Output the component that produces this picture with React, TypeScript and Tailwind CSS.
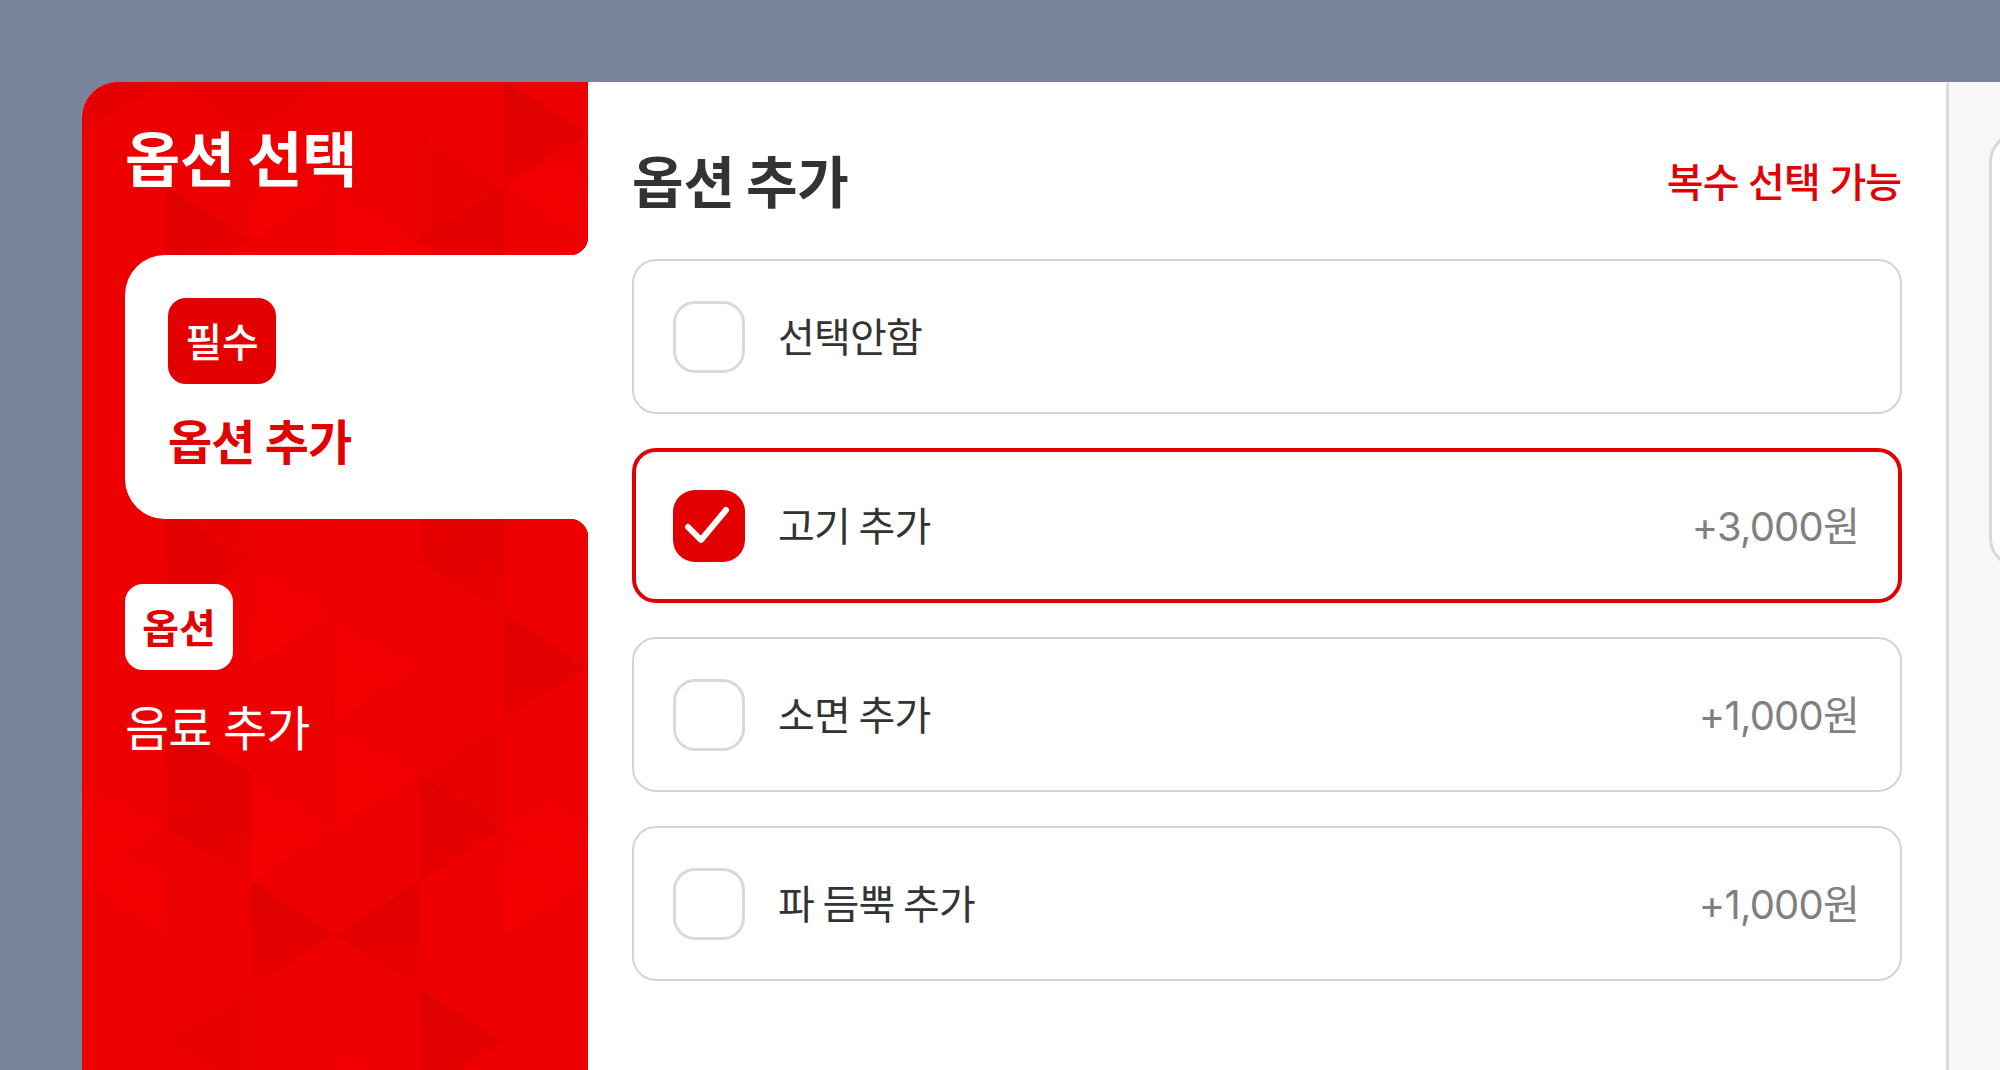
const DARK = ['0,1', '1,4', '4,4', '5,2', '1,10', '4,9', '4,10', '5,12', '4,15', '1,14', '1,15', '2,17', '3,17', '4,19'];
const MID = ['1,1', '4,14', '1,9', '1,19', '4,3', '2,1'];
const LIGHT = ['5,3', '3,4', '2,11', '3,12', '0,15', '0,16', '3,14', '2,15', '5,15', '5,16', '3,20', '2,3'];

const stepX = 84.4;
const stepY = 53.4;

function trianglePoints(c: number, k: number) {
  return [k, k + 1, k + 2]
    .map((m) => {
      const col = (m + c) % 2 === 0 ? c : c + 1;
      return `${col * stepX},${m * stepY - 55}`;
    })
    .join(' ');
}

function triangleFill(c: number, m: number) {
  const key = `${c},${m}`;
  if (DARK.includes(key)) return 'url(#tri-dark)';
  if (MID.includes(key)) return '#e80000';
  if (LIGHT.includes(key)) return 'url(#tri-light)';
  return (c * 3 + m) % 4 === 0 ? '#ee0000' : '#ec0000';
}

function RedPattern() {
  const tris = [];
  for (let c = 0; c < 6; c++) {
    for (let k = 0; k < 22; k++) {
      tris.push(<polygon key={`${c}-${k}`} points={trianglePoints(c, k)} fill={triangleFill(c, k + 1)} />);
    }
  }
  return (
    <svg className="absolute inset-0 w-full h-full" viewBox="0 0 506 988" preserveAspectRatio="none">
      <defs>
        <linearGradient id="tri-dark" x1="0" y1="0" x2="0.3" y2="1">
          <stop offset="0" stopColor="#dd0000" />
          <stop offset="1" stopColor="#e80000" />
        </linearGradient>
        <linearGradient id="tri-light" x1="0" y1="1" x2="0.3" y2="0">
          <stop offset="0" stopColor="#f60000" />
          <stop offset="1" stopColor="#ee0000" />
        </linearGradient>
      </defs>
      <rect width="506" height="988" fill="#ec0000" />
      {tris}
    </svg>
  );
}

interface OptionRowProps {
  label: string;
  price?: string;
  checked?: boolean;
}

function OptionRow({ label, price, checked }: OptionRowProps) {
  return (
    <div
      className={`h-[155px] rounded-[24px] flex items-center bg-white ${
        checked ? 'border-[4px] border-[#e30000] pl-[37px] pr-[39px]' : 'border-2 border-[#d4d4d4] pl-[39px] pr-[41px]'
      }`}
    >
      {checked ? (
        <div className="w-[72px] h-[72px] rounded-[22px] bg-[#e30000] flex-none">
          <svg viewBox="0 0 72 72" className="w-full h-full">
            <path d="M15 37L28 50L53 20" fill="none" stroke="#fff" strokeWidth="6" strokeLinecap="round" strokeLinejoin="round" />
          </svg>
        </div>
      ) : (
        <div className="w-[72px] h-[72px] rounded-[22px] border-[3px] border-[#d9d9d9] flex-none" />
      )}
      <span className="ml-[33px] pt-[2px] text-[40px] leading-[48px] tracking-[-0.02em] [word-spacing:-2px] text-[#333]">{label}</span>
      {price && <span className="ml-auto pt-[2px] text-[40px] leading-[48px] tracking-[-0.02em] text-[#808080]">{price}</span>}
    </div>
  );
}

export default function App() {
  return (
    <div className="h-[1070px] overflow-hidden bg-[#79839a] pt-[82px] pl-[82px] font-['Inter','Noto_Sans_CJK_KR',sans-serif]">
      <div className="flex h-[988px] rounded-tl-[36px] overflow-hidden bg-white">
        {/* Sidebar */}
        <div className="relative w-[506px] flex-none">
          <RedPattern />
          <div className="relative">
            <div className="h-[173px] pl-[43px] pt-[42px]">
              <h1 className="text-[60px] leading-[72px] font-bold tracking-[-0.002em] [word-spacing:-2px] text-white">옵션 선택</h1>
            </div>

            <div className="relative ml-[43px] h-[264px] rounded-l-[40px] bg-white p-[43px]">
              <span className="absolute right-0 -top-[18px] w-[18px] h-[18px] bg-[radial-gradient(circle_at_0_0,transparent_18px,white_18.5px)]" />
              <span className="absolute right-0 -bottom-[18px] w-[18px] h-[18px] bg-[radial-gradient(circle_at_0_100%,transparent_18px,white_18.5px)]" />
              <div className="w-[108px] h-[86px] rounded-[18px] bg-[#e30000] flex items-center justify-center pt-[4px] text-[40px] font-medium text-white">
                필수
              </div>
              <div className="mt-[31px] text-[48px] leading-[56px] font-bold tracking-[-0.02em] text-[#e30000]">옵션 추가</div>
            </div>

            <div className="pl-[43px] pt-[65px]">
              <div className="w-[108px] h-[86px] rounded-[18px] bg-white flex items-center justify-center pt-[4px] text-[40px] font-semibold text-[#e30000]">
                옵션
              </div>
              <div className="mt-[31px] text-[48px] leading-[56px] tracking-[-0.02em] [word-spacing:-1px] text-white">음료 추가</div>
            </div>
          </div>
        </div>

        {/* Option list */}
        <div className="w-[1361px] flex-none border-r-[3px] border-[#dcdcdc] pl-[44px] pr-[44px] pt-[67px]">
          <div className="flex items-center justify-between h-[64px] mb-[46px]">
            <h2 className="pt-[4px] text-[56px] leading-[64px] font-bold tracking-[-0.002em] [word-spacing:-2px] text-[#333]">옵션 추가</h2>
            <span className="pt-[4px] pr-[1px] text-[40px] leading-[48px] font-medium tracking-[-0.025em] text-[#e30000]">복수 선택 가능</span>
          </div>
          <div className="flex flex-col gap-[34px]">
            <OptionRow label="선택안함" />
            <OptionRow label="고기 추가" price="+3,000원" checked />
            <OptionRow label="소면 추가" price="+1,000원" />
            <OptionRow label="파 듬뿍 추가" price="+1,000원" />
          </div>
        </div>

        {/* Cart panel */}
        <div className="flex-1 bg-[#f7f7f7] pl-[40px] pt-[50px]">
          <div className="h-[436px] w-[200px] rounded-l-[30px] border-[3px] border-[#d9d9d9] bg-white" />
        </div>
      </div>
    </div>
  );
}
